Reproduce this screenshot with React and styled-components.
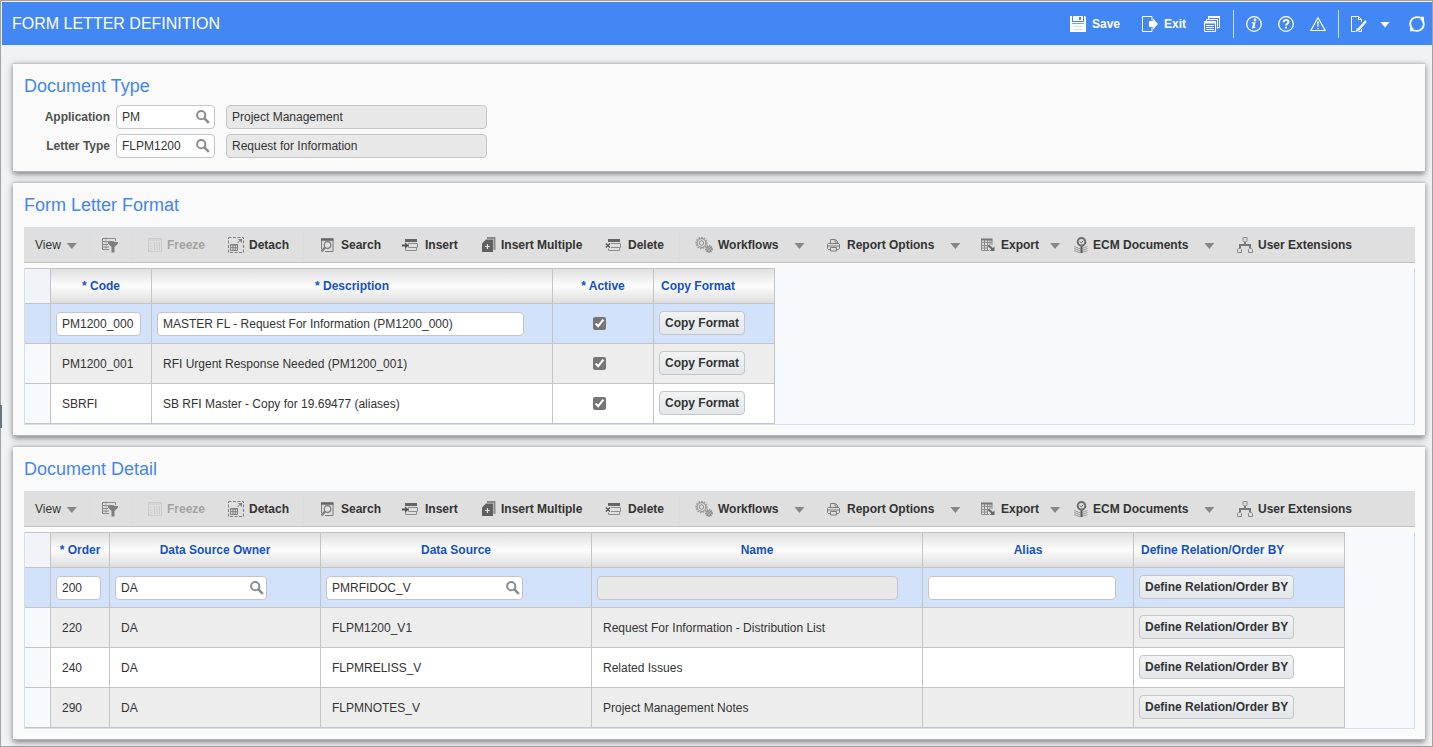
import React from "react";
import styled, { createGlobalStyle, css } from "styled-components";

const GlobalStyle = createGlobalStyle`
  * {
    box-sizing: border-box;
  }
  body {
    margin: 0;
    background: #f1f2f4;
    color: #333;
    font: 12px/16px "Liberation Sans", Arial, sans-serif;
  }
  button, input {
    font: inherit;
    color: inherit;
  }
  svg {
    display: block;
    flex: none;
  }
`;

/* ---------- icons ---------- */

const SaveIcon = () => (
  <svg width="16" height="16" viewBox="0 0 16 16" fill="#fff">
    <path d="M0 0h2v6h12V0h1l1 1v15H0z M2 7.300v.7h12v-.7z" fillRule="evenodd" />
    <path d="M3 0h10v5H3zM9 1v3h2V1z" fillRule="evenodd" />
    <path d="M3 10.500h10M3 13.500h10" stroke="#cfe0fc" />
  </svg>
);

const ExitIcon = () => (
  <svg width="16" height="16" viewBox="0 0 16 16">
    <path d="M10 4.500v-4H.5v15H10v-4" fill="none" stroke="#fff" />
    <path d="M7 5h4V2.500l5 5.500-5 5.500V11H7z" fill="#fff" />
  </svg>
);

const WindowsIcon = () => (
  <svg width="16" height="16" viewBox="0 0 16 16" fill="none" stroke="#fff">
    <path d="M4.500 3V.5h11v11H13" />
    <path d="M4 1h12" strokeWidth="2" />
    <path d="M2.500 5V3.500h11V13" strokeWidth="1" />
    <path d="M.5 5.500h11v10H.5z" />
    <path d="M0 6.500h12" strokeWidth="2" />
    <path d="M2 9.500h8M2 11.500h8M2 13.500h8" />
  </svg>
);

const InfoIcon = () => (
  <svg width="16" height="16" viewBox="0 0 16 16">
    <circle cx="8" cy="8" r="7.300" fill="none" stroke="#fff" strokeWidth="1.300" />
    <circle cx="9" cy="4" r="1.400" fill="#fff" />
    <path d="M5.800 6.300h3.900l-1.400 4.900 1.400-.4-.3.900-2.300.9c-1 0-1.200-.5-1-1.300l1.100-3.900-1.500-.2z" fill="#fff" />
  </svg>
);

const HelpIcon = () => (
  <svg width="16" height="16" viewBox="0 0 16 16">
    <circle cx="8" cy="8" r="7.300" fill="none" stroke="#fff" strokeWidth="1.300" />
    <path d="M5.600 6.200c0-3.200 5-3.100 4.900-.1 0 1.700-2.400 1.700-2.400 3.500" fill="none" stroke="#fff" strokeWidth="1.900" />
    <path d="M7 10.700h2v1.900H7z" fill="#fff" />
  </svg>
);

const WarnIcon = () => (
  <svg width="16" height="16" viewBox="0 0 16 16">
    <path d="M8 1.800 15.200 14.500H.8z" fill="none" stroke="#fff" strokeWidth="1.200" />
    <path d="M7.200 5.500h1.600L8.500 11h-1zM7.300 12h1.400v1.300H7.300z" fill="#fff" />
  </svg>
);

const EditIcon = () => (
  <svg width="16" height="16" viewBox="0 0 16 16" fill="none" stroke="#fff">
    <path d="M10.500 6V3.500l-3-3H.5v15h4M7.500.5v3h3M10.500 13v2.500h-3" />
    <path d="m15 5-7.500 8.500" strokeWidth="2.400" />
    <path d="m4.500 16 1.500-4 2.500 2.300z" fill="#fff" stroke="none" />
  </svg>
);

const RefreshIcon = () => (
  <svg width="16" height="16" viewBox="0 0 16 16">
    <path d="M4.200 13.600A6.900 6.900 0 0 1 5.200 1.700M5.200 1.700A6.900 6.900 0 0 1 11 1.800M11.800 2.400A6.900 6.900 0 0 1 10.800 14.300M10.800 14.300A6.900 6.900 0 0 1 5 14.200" fill="none" stroke="#fff" strokeWidth="1.800" />
    <path d="M10 .8h5v5zM6 15.200H1v-5z" fill="#fff" />
  </svg>
);

const Magnifier = () => (
  <svg width="14" height="14" viewBox="0 0 14 14" fill="none" stroke="#8a8d90">
    <circle cx="5.200" cy="5.200" r="4.100" strokeWidth="2" />
    <path d="m8.200 8.200 4.600 4.600" strokeWidth="2.600" />
  </svg>
);

const FilterIcon = () => (
  <svg width="16" height="16" viewBox="0 0 16 16">
    <path d="M13.500 4V1.500H.5v11H7M1 4.500h11M1 7.500h5M1 10h6" fill="none" stroke="#8a8a8a" />
    <path d="M4 .5v12" stroke="#8a8a8a" strokeDasharray="2 1" />
    <path d="M6 5h10v1.500L12.500 10v5.500H9.500V10L6 6.500z" fill="#7e7e7e" />
  </svg>
);

const FreezeIcon = () => (
  <svg width="14" height="14" viewBox="0 0 14 14" fill="none" stroke="#cbcbcb">
    <path d="M.5.5h13v13H.5zM0 2h14M6.500 4v8M9 4v8M11.500 4v8" />
    <path d="m1.500 6 3-2M1.500 9l3-2M1.500 12l3-2" />
  </svg>
);

const DetachIcon = () => (
  <svg width="16" height="16" viewBox="0 0 16 16" fill="none" stroke="#808080">
    <path d="M.5.5h15v15H.5z" strokeDasharray="3 1.500" />
    <path d="M2.500 7.500h7v6h-7zM2 8h8M5 8v5M7.300 8v5M3 10.700h6" />
    <path d="m9.500 6 3-3" />
    <path d="M10 2h4v4z" fill="#808080" stroke="none" />
  </svg>
);

const SearchIcon = () => (
  <svg width="16" height="16" viewBox="0 0 16 16" fill="none" stroke="#7a7a7a">
    <path d="M5 14.500h8v-12M1.500 12V2.500" />
    <path d="M1 2.500h12.500" strokeWidth="2.600" stroke="#666" />
    <circle cx="7.500" cy="8" r="3.300" strokeWidth="1.200" />
    <path d="m5 10.500-3.500 4" strokeWidth="2" />
  </svg>
);

const InsertIcon = () => (
  <svg width="18" height="16" viewBox="0 0 18 16" fill="none" stroke="#8e8e8e">
    <path d="M3 2h12v3H3z" fill="#666" stroke="none" />
    <path d="M6.500 6.500h9v4h-9zM3.500 10.500v3h11v-3" />
    <path d="M0 8.500h4" stroke="#555" strokeWidth="2" />
    <path d="M3 5.500 7 8.500 3 11.500z" fill="#555" stroke="none" />
  </svg>
);

const InsertMultipleIcon = () => (
  <svg width="14" height="16" viewBox="0 0 14 16">
    <path d="M5 1h7.500v12" fill="none" stroke="#8a8a8a" strokeWidth="2" />
    <path d="M4 2.500h7V15H0V6.500z" fill="#606060" />
    <path d="M5.500 7v5M3 9.500h5" stroke="#e4e4e4" strokeWidth="1.200" />
  </svg>
);

const DeleteIcon = () => (
  <svg width="18" height="16" viewBox="0 0 18 16" fill="none" stroke="#8e8e8e">
    <path d="M3 2h12v3H3z" fill="#666" stroke="none" />
    <path d="M6 6.500h9.500v4H6M3.500 11.500v2h11v-3" />
    <path d="m.8 6.500 4.200 4M5 6.500l-4.200 4" stroke="#555" strokeWidth="1.300" />
  </svg>
);

const WorkflowIcon = () => (
  <svg width="18" height="16" viewBox="0 0 18 16" fill="none" stroke="#8a8a8a">
    <circle cx="6.500" cy="6" r="5.400" strokeWidth="1.600" strokeDasharray="1.700 1" stroke="#a0a0a0" />
    <circle cx="6.500" cy="6" r="4.400" />
    <circle cx="6.500" cy="6" r="2.200" />
    <circle cx="14" cy="12" r="3.200" strokeWidth="1.500" strokeDasharray="1.300 .8" />
    <circle cx="14" cy="12" r="2.200" stroke="#777" />
    <circle cx="14" cy="12" r=".7" />
  </svg>
);

const PrintIcon = () => (
  <svg width="15" height="16" viewBox="0 0 15 16" fill="none" stroke="#7c7c7c">
    <path d="M3.500 6V2.500h5l2 2V6M8 3v2h2.500" />
    <path d="M3 12.500H1.500l-1-1v-4l1-1h10l1 1v4l-1 1H10M1 9h12" />
    <path d="M3.500 10.500h6v3.500h-6z" />
  </svg>
);

const ExportIcon = () => (
  <svg width="16" height="16" viewBox="0 0 16 16" fill="none" stroke="#8a8a8a">
    <path d="M12 8V2.500H1.500v11H9M4.500 2v12M7.500 2v12M10 2v6M1 5.500h11M1 8.500h9M1 11h7" />
    <path d="M1 2.500h11.500" strokeWidth="2" stroke="#757575" />
    <path d="m8.500 8.500 4 3.500" strokeWidth="2" stroke="#666" />
    <path d="M14.500 9.500v4.500h-5z" fill="#666" stroke="none" />
  </svg>
);

const EcmIcon = () => (
  <svg width="14" height="16" viewBox="0 0 14 16" fill="none" stroke="#777">
    <path d="M0 9.500 6.500 12l7-2.500M0 11.500 6.500 14l7-2.500M0 13.500 6.500 16l7-2.500" stroke="#989898" />
    <circle cx="7.500" cy="4.800" r="3.800" strokeWidth="2" stroke="#6c6c6c" />
    <path d="m5.800 4.500 1.500 1.600 2-2.600" />
    <path d="M7.500 9v7" strokeWidth="2" stroke="#5c5c5c" />
  </svg>
);

const ExtensionsIcon = () => (
  <svg width="16" height="16" viewBox="0 0 16 16" fill="none" stroke="#777">
    <path d="M6 .5h4v3L9 5H7L6 3.500zM.5 12.500l1-1h2l1 1v3h-4zM11.500 12.500l1-1h2l1 1v3h-4z" stroke="#8a8a8a" />
    <path d="M8 5v3M3 11V8h10v3" strokeWidth="2" />
  </svg>
);

/* ---------- data ---------- */

const tools = [
  { label: "View", plain: true, width: 54, caretGap: 1 },
  { separator: 12 },
  { title: "Query by example", icon: <FilterIcon />, width: 29 },
  { separator: 16 },
  { label: "Freeze", icon: <FreezeIcon />, width: 80, disabled: true },
  { label: "Detach", icon: <DetachIcon />, width: 75 },
  { separator: 16 },
  { label: "Search", icon: <SearchIcon />, width: 82 },
  { label: "Insert", icon: <InsertIcon />, width: 80 },
  { label: "Insert Multiple", icon: <InsertMultipleIcon />, width: 123 },
  { label: "Delete", icon: <DeleteIcon />, width: 74 },
  { separator: 15 },
  { label: "Workflows", icon: <WorkflowIcon />, width: 132, caretGap: 11 },
  { label: "Report Options", icon: <PrintIcon />, width: 153, caretGap: 11 },
  { label: "Export", icon: <ExportIcon />, width: 94, caretGap: 6 },
  { label: "ECM Documents", icon: <EcmIcon />, width: 163, caretGap: 11 },
  { label: "User Extensions", icon: <ExtensionsIcon />, width: 120 },
];

const formats = [
  { code: "PM1200_000", description: "MASTER FL - Request For Information (PM1200_000)" },
  { code: "PM1200_001", description: "RFI Urgent Response Needed (PM1200_001)" },
  { code: "SBRFI", description: "SB RFI Master - Copy for 19.69477 (aliases)" },
];

const details = [
  { order: "200", owner: "DA", source: "PMRFIDOC_V", name: "" },
  { order: "220", owner: "DA", source: "FLPM1200_V1", name: "Request For Information - Distribution List" },
  { order: "240", owner: "DA", source: "FLPMRELISS_V", name: "Related Issues" },
  { order: "290", owner: "DA", source: "FLPMNOTES_V", name: "Project Management Notes" },
];

/* ---------- components ---------- */

function Toolbar() {
  return (
    <ToolStrip>
      {tools.map((tool, i) =>
        tool.separator ? (
          <ToolSeparator key={i} $space={tool.separator} />
        ) : (
          <ToolButton
            key={i}
            type="button"
            $width={tool.width}
            $plain={tool.plain}
            disabled={tool.disabled}
            aria-label={tool.title}
          >
            {tool.icon}
            {tool.label && <span>{tool.label}</span>}
            {tool.caretGap && <Caret $gap={tool.caretGap} />}
          </ToolButton>
        )
      )}
    </ToolStrip>
  );
}

function LookupField({ id, label, value, width }) {
  return (
    <Lookup $width={width}>
      <input id={id} aria-label={label} defaultValue={value} />
      <button type="button" aria-label="Look up">
        <Magnifier />
      </button>
    </Lookup>
  );
}

function FormatTable() {
  return (
    <Grid>
      <Table $width={750}>
        <colgroup>
          <Col $width={26} />
          <Col $width={101} />
          <Col $width={401} />
          <Col $width={101} />
          <Col $width={121} />
        </colgroup>
        <thead>
          <tr>
            <Corner />
            <Th>* Code</Th>
            <Th>* Description</Th>
            <Th>* Active</Th>
            <Th $left>Copy Format</Th>
          </tr>
        </thead>
        <tbody>
          {formats.map((row, i) => (
            <Row key={row.code} $selected={i === 0}>
              <RowHead />
              <Td $field={i === 0}>
                {i === 0 ? <Field aria-label="Code" $width={85} defaultValue={row.code} /> : row.code}
              </Td>
              <Td $field={i === 0}>
                {i === 0 ? (
                  <Field aria-label="Description" $width={367} defaultValue={row.description} />
                ) : (
                  row.description
                )}
              </Td>
              <CheckCell>
                <input type="checkbox" aria-label={"Active " + row.code} defaultChecked />
              </CheckCell>
              <ButtonCell>
                <GridButton type="button">Copy Format</GridButton>
              </ButtonCell>
            </Row>
          ))}
        </tbody>
      </Table>
    </Grid>
  );
}

function DetailTable() {
  return (
    <Grid>
      <Table $width={1320}>
        <colgroup>
          <Col $width={26} />
          <Col $width={59} />
          <Col $width={211} />
          <Col $width={271} />
          <Col $width={331} />
          <Col $width={211} />
          <Col $width={211} />
        </colgroup>
        <thead>
          <tr>
            <Corner />
            <Th>* Order</Th>
            <Th>Data Source Owner</Th>
            <Th>Data Source</Th>
            <Th>Name</Th>
            <Th>Alias</Th>
            <Th $left>Define Relation/Order BY</Th>
          </tr>
        </thead>
        <tbody>
          {details.map((row, i) => {
            const editing = i === 0;
            return (
              <Row key={row.order} $selected={editing}>
                <RowHead />
                <Td $field={editing}>
                  {editing ? <Field aria-label="Order" $width={45} defaultValue={row.order} /> : row.order}
                </Td>
                <Td $field={editing}>
                  {editing ? <LookupField label="Data Source Owner" value={row.owner} width={152} /> : row.owner}
                </Td>
                <Td $field={editing}>
                  {editing ? <LookupField label="Data Source" value={row.source} width={197} /> : row.source}
                </Td>
                <Td $field={editing}>
                  {editing ? <Field aria-label="Name" $width={301} readOnly /> : row.name}
                </Td>
                <Td $field={editing}>{editing && <Field aria-label="Alias" $width={188} />}</Td>
                <ButtonCell>
                  <GridButton type="button">Define Relation/Order BY</GridButton>
                </ButtonCell>
              </Row>
            );
          })}
        </tbody>
      </Table>
    </Grid>
  );
}

function App() {
  return (
    <Page>
      <GlobalStyle />
      <SplitterHandle />
      <Header>
        <h1>FORM LETTER DEFINITION</h1>
        <Actions>
          <Action type="button" $space={22}>
            <SaveIcon />
            Save
          </Action>
          <Action type="button" $space={18}>
            <ExitIcon />
            Exit
          </Action>
          <Action type="button" aria-label="Windows" $space={13}>
            <WindowsIcon />
          </Action>
          <Divider />
          <Action type="button" aria-label="Information" $space={16}>
            <InfoIcon />
          </Action>
          <Action type="button" aria-label="Help" $space={16}>
            <HelpIcon />
          </Action>
          <Action type="button" aria-label="Warnings" $space={12}>
            <WarnIcon />
          </Action>
          <Divider />
          <Action type="button" aria-label="Edit" $space={13}>
            <EditIcon />
          </Action>
          <Action type="button" aria-label="More" $space={19}>
            <Caret $gap={0} />
          </Action>
          <Action type="button" aria-label="Refresh" $space={0}>
            <RefreshIcon />
          </Action>
        </Actions>
      </Header>
      <Main>
        <Panel>
          <PanelTitle>Document Type</PanelTitle>
          <Form>
            <FormRow>
              <label htmlFor="application">Application</label>
              <LookupField id="application" value="PM" width={99} />
              <Field aria-label="Application name" $width={261} readOnly value="Project Management" />
            </FormRow>
            <FormRow>
              <label htmlFor="letter-type">Letter Type</label>
              <LookupField id="letter-type" value="FLPM1200" width={99} />
              <Field aria-label="Letter type name" $width={261} readOnly value="Request for Information" />
            </FormRow>
          </Form>
        </Panel>
        <Panel>
          <PanelTitle>Form Letter Format</PanelTitle>
          <Toolbar />
          <FormatTable />
        </Panel>
        <Panel>
          <PanelTitle>Document Detail</PanelTitle>
          <Toolbar />
          <DetailTable />
        </Panel>
      </Main>
    </Page>
  );
}

export default App;

/* ---------- styles ---------- */

const Page = styled.div`
  position: relative;
  min-height: 100vh;
  padding: 1px 0 0 1px;
  border: 1px solid #a3a3a3;
  background: #f1f2f4;
`;

const SplitterHandle = styled.div`
  position: absolute;
  top: 404px;
  left: -1px;
  width: 2px;
  height: 23px;
  background: #6d747b;
`;

const Header = styled.header`
  display: flex;
  align-items: center;
  justify-content: space-between;
  height: 43px;
  padding: 0 7px 0 10px;
  background: #4387f4;
  color: #fff;

  h1 {
    margin: 0;
    font-size: 16px;
    line-height: 20px;
    font-weight: normal;
  }
`;

const Actions = styled.div`
  display: flex;
  align-items: center;
`;

const bareButton = css`
  display: flex;
  align-items: center;
  padding: 0;
  border: 0;
  background: none;
  white-space: nowrap;
  cursor: pointer;
`;

const Action = styled.button`
  ${bareButton}
  gap: 6px;
  margin-right: ${(props) => props.$space}px;
  color: #fff;
  font-weight: bold;
`;

const Divider = styled.span`
  width: 1px;
  height: 28px;
  margin-right: 12px;
  background: #c5dafc;
`;

const Caret = styled.span`
  width: 10px;
  height: 6px;
  margin-top: 2px;
  margin-left: ${(props) => props.$gap}px;
  background: ${(props) => (props.$gap ? "#85888b" : "#fff")};
  clip-path: polygon(0 0, 100% 0, 50% 100%);
`;

const Main = styled.main`
  display: flex;
  flex-direction: column;
  gap: 10px;
  padding: 18px 7px 6px 11px;
`;

const Panel = styled.section`
  padding: 11px 10px 10px 11px;
  border-top: 1px solid #c5c7c9;
  border-bottom: 1px solid #b5b7b9;
  background: #fafafa;
  box-shadow: 0 2px 6px rgba(0, 0, 0, 0.5);
`;

const PanelTitle = styled.h2`
  margin: 0 0 8px;
  color: #4585f2;
  font-size: 18px;
  line-height: 22px;
  font-weight: normal;
`;

const Form = styled.div`
  display: flex;
  flex-direction: column;
  gap: 5px;
  padding-bottom: 3px;
`;

const FormRow = styled.div`
  display: flex;
  align-items: center;

  label {
    width: 86px;
    margin-right: 6px;
    color: #505050;
    font-weight: bold;
    text-align: right;
  }
  > input {
    margin-left: 11px;
  }
`;

const Field = styled.input`
  display: block;
  width: ${(props) => props.$width}px;
  height: 24px;
  padding: 0 5px;
  border: 1px solid #c4c5c6;
  border-radius: 4px;
  background: ${(props) => (props.readOnly ? "#e8e8e8" : "#fff")};
  outline: none;
`;

const Lookup = styled.div`
  display: flex;
  align-items: center;
  width: ${(props) => props.$width}px;
  height: 24px;
  padding: 0 4px 0 5px;
  border: 1px solid #c4c5c6;
  border-radius: 4px;
  background: #fff;

  input {
    flex: 1;
    min-width: 0;
    padding: 0;
    border: 0;
    background: none;
    outline: none;
  }
  button {
    ${bareButton}
  }
`;

const ToolStrip = styled.div`
  display: flex;
  align-items: center;
  height: 36px;
  margin: 11px 0 5px;
  padding-left: 11px;
  border-top: 1px solid #d6dfec;
  border-bottom: 1px solid #c1c1c1;
  background: #dfdfdf;
`;

const ToolButton = styled.button`
  ${bareButton}
  gap: 5px;
  flex: none;
  width: ${(props) => props.$width}px;
  font-weight: ${(props) => (props.$plain ? "normal" : "bold")};

  &:disabled {
    color: #a3a3a3;
    cursor: default;
  }
`;

const ToolSeparator = styled.span`
  flex: none;
  width: 1px;
  height: 30px;
  margin-right: ${(props) => props.$space}px;
  background: #d8dde3;
`;

const Grid = styled.div`
  border: 1px solid #d3dde7;
  border-top: 0;
  background: #f8f9fd;
`;

const Table = styled.table`
  width: ${(props) => props.$width}px;
  table-layout: fixed;
  border-collapse: separate;
  border-spacing: 0;
`;

const Col = styled.col`
  width: ${(props) => props.$width}px;
`;

const Th = styled.th`
  height: 36px;
  padding: 0 7px;
  border: 1px solid #c4c4c4;
  border-left: 0;
  background: linear-gradient(#e0e0e0, #fcfcfc 50%, #dedede);
  color: #1452c2;
  font-weight: bold;
  text-align: ${(props) => (props.$left ? "left" : "center")};
  white-space: nowrap;
`;

const Corner = styled.td`
  padding: 0;
  border: 1px solid #c4c4c4;
  border-left: 0;
  background: #f2f3f8;
`;

const Td = styled.td`
  height: 40px;
  padding: 0 0 0 ${(props) => (props.$field ? 5 : 11)}px;
  border-right: 1px solid #c4c4c4;
  border-bottom: 1px solid #c4c4c4;
  white-space: nowrap;

  ${Lookup} {
    padding-right: 2px;
  }
`;

const RowHead = styled(Td)`
  background: #f8f9fd;
`;

const ButtonCell = styled(Td)`
  padding: 0 0 2px 5px;
`;

const CheckCell = styled(Td)`
  padding: 0 7px 0 0;
  text-align: center;

  input {
    display: block;
    width: 13px;
    height: 13px;
    margin: 0 auto;
    accent-color: #767676;
  }
`;

const Row = styled.tr`
  background: #fff;

  &:nth-child(even) {
    background: #ededed;
  }
  ${(props) =>
    props.$selected &&
    css`
      &, ${RowHead} {
        background: #d2e2fb;
      }
    `}
`;

const GridButton = styled.button`
  display: block;
  height: 24px;
  padding: 0 5px;
  border: 1px solid #c4c5c6;
  border-radius: 4px;
  background: linear-gradient(#f1f3f4, #e3e7ea);
  font-weight: bold;
  white-space: nowrap;
  cursor: pointer;
`;
